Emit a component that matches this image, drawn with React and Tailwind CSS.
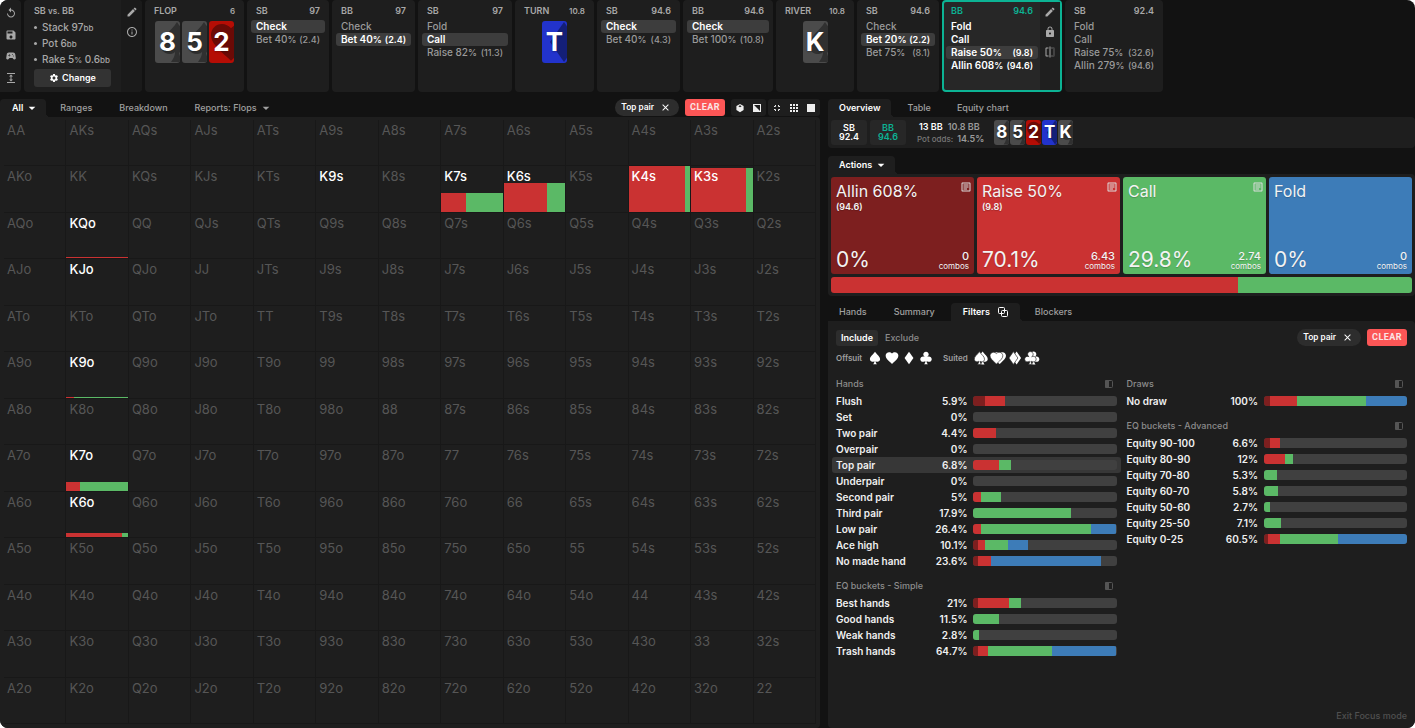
import React, { useState } from 'react'
import clsx from 'clsx'
import {
  MdReplay, MdSave, MdSportsEsports, MdExpand, MdEdit, MdInfoOutline, MdSettings,
  MdLock, MdFlip, MdClose, MdArrowDropDown, MdOutlineArticle
} from 'react-icons/md'

const RANKS = 'AKQJT98765432'.split('')

const SUIT_PATHS = {
  spade: 'M12,2C9,7 4,9 4,14C4,16 6,18 8,18C9,18 10,18 11,17C11,17 11.32,19 9,22H15C13,19 13,17 13,17C14,18 15,18 16,18C18,18 20,16 20,14C20,9 15,7 12,2Z',
  heart: 'M12,21.35L10.55,20.03C5.4,15.36 2,12.27 2,8.5C2,5.41 4.42,3 7.5,3C9.24,3 10.91,3.81 12,5.08C13.09,3.81 14.76,3 16.5,3C19.58,3 22,5.41 22,8.5C22,12.27 18.6,15.36 13.45,20.03L12,21.35Z',
  diamond: 'M19,12L12,22L5,12L12,2Z',
  club: 'M12,2C14.3,2 16.3,4 16.3,6.2C16.21,8.77 14.34,9.83 14.04,10C15.04,9.5 16.5,9.5 16.5,9.5C19,9.5 21,11.3 21,13.8C21,16.3 19,18 16.5,18C16.5,18 15,18 13,17C13,17 12.7,19 15,22H9C11.3,19 11,17 11,17C9,18 7.5,18 7.5,18C5,18 3,16.3 3,13.8C3,11.3 5,9.5 7.5,9.5C7.5,9.5 8.96,9.5 9.96,10C9.66,9.83 7.79,8.77 7.7,6.2C7.7,4 9.7,2 12,2Z'
}
const SUITS = Object.keys(SUIT_PATHS)

const CARD_COLORS = {
  spade: { bg: 'bg-[#4b4b4b]', shade: '#303030' },
  heart: { bg: 'bg-[#b50d05]', shade: '#6b0a06' },
  diamond: { bg: 'bg-[#2233cc]', shade: '#141f78' }
}

const BOARD = [
  { rank: '8', suit: 'spade' },
  { rank: '5', suit: 'spade' },
  { rank: '2', suit: 'heart' },
  { rank: 'T', suit: 'diamond' },
  { rank: 'K', suit: 'spade' }
]

const SEGMENT_COLORS = {
  allin: 'bg-[#7d1f1f]',
  raise: 'bg-[#ca3232]',
  call: 'bg-[#5bb966]',
  fold: 'bg-[#3d7cb8]'
}

// fill = height of the coloured part in the cell, raise = share of it that raises
const ACTIVE_HANDS = {
  K9s: { fill: 0 },
  K7s: { fill: 41, raise: 40 },
  K6s: { fill: 64, raise: 71 },
  K4s: { fill: 100, raise: 91 },
  K3s: { fill: 97, raise: 89 },
  KQo: { fill: 3, raise: 100 },
  KJo: { fill: 0 },
  K9o: { fill: 2, raise: 12 },
  K7o: { fill: 19, raise: 22 },
  K6o: { fill: 9, raise: 90 }
}

const HISTORY = [
  { street: 'FLOP', pot: '6', cards: BOARD.slice(0, 3), width: 'w-[99px]' },
  { player: 'SB', stack: '97', width: 'w-[82px]', picked: 0, actions: [['Check'], ['Bet 40', '2.4']] },
  { player: 'BB', stack: '97', width: 'w-[83px]', picked: 1, actions: [['Check'], ['Bet 40', '2.4']] },
  { player: 'SB', stack: '97', width: 'w-[94px]', picked: 1, actions: [['Fold'], ['Call'], ['Raise 82', '11.3']] },
  { street: 'TURN', pot: '10.8', cards: BOARD.slice(3, 4), width: 'w-[79px]' },
  { player: 'SB', stack: '94.6', width: 'w-[83px]', picked: 0, actions: [['Check'], ['Bet 40', '4.3']] },
  { player: 'BB', stack: '94.6', width: 'w-[90px]', picked: 0, actions: [['Check'], ['Bet 100', '10.8']] },
  { street: 'RIVER', pot: '10.8', cards: BOARD.slice(4), width: 'w-[78px]' },
  { player: 'SB', stack: '94.6', width: 'w-[82px]', picked: 1, actions: [['Check'], ['Bet 20', '2.2'], ['Bet 75', '8.1']] },
  { player: 'BB', stack: '94.6', width: 'w-[120px]', picked: 2, current: true, actions: [['Fold'], ['Call'], ['Raise 50', '9.8'], ['Allin 608', '94.6']] },
  { player: 'SB', stack: '92.4', width: 'w-[98px]', picked: -1, actions: [['Fold'], ['Call'], ['Raise 75', '32.6'], ['Allin 279', '94.6']] }
]

const ACTION_CARDS = [
  { type: 'allin', name: 'Allin 608%', size: '(94.6)', pct: '0%', combos: '0', note: true },
  { type: 'raise', name: 'Raise 50%', size: '(9.8)', pct: '70.1%', combos: '6.43', note: true },
  { type: 'call', name: 'Call', pct: '29.8%', combos: '2.74', note: true },
  { type: 'fold', name: 'Fold', pct: '0%', combos: '0' }
]

const HANDS = [
  { name: 'Flush', pct: '5.9%', allin: 8, raise: 14 },
  { name: 'Set', pct: '0%' },
  { name: 'Two pair', pct: '4.4%', raise: 16 },
  { name: 'Overpair', pct: '0%' },
  { name: 'Top pair', pct: '6.8%', raise: 18, call: 8 },
  { name: 'Underpair', pct: '0%' },
  { name: 'Second pair', pct: '5%', raise: 5, call: 14 },
  { name: 'Third pair', pct: '17.9%', call: 68 },
  { name: 'Low pair', pct: '26.4%', raise: 5, call: 77, fold: 18 },
  { name: 'Ace high', pct: '10.1%', allin: 3, raise: 5, call: 16, fold: 14 },
  { name: 'No made hand', pct: '23.6%', allin: 3, raise: 9, fold: 77 }
]

const SIMPLE_BUCKETS = [
  { name: 'Best hands', pct: '21%', allin: 3, raise: 22, call: 8 },
  { name: 'Good hands', pct: '11.5%', call: 18 },
  { name: 'Weak hands', pct: '2.8%', call: 4 },
  { name: 'Trash hands', pct: '64.7%', allin: 3, raise: 7, call: 45, fold: 45 }
]

const DRAWS = [{ name: 'No draw', pct: '100%', allin: 4, raise: 19, call: 48, fold: 29 }]

const ADVANCED_BUCKETS = [
  { name: 'Equity 90-100', pct: '6.6%', allin: 4, raise: 7 },
  { name: 'Equity 80-90', pct: '12%', raise: 15, call: 5 },
  { name: 'Equity 70-80', pct: '5.3%', call: 9 },
  { name: 'Equity 60-70', pct: '5.8%', call: 10 },
  { name: 'Equity 50-60', pct: '2.7%', call: 4 },
  { name: 'Equity 25-50', pct: '7.1%', call: 12 },
  { name: 'Equity 0-25', pct: '60.5%', allin: 3, raise: 8, call: 41, fold: 48 }
]

const PlayingCard = ({ rank, suit, small }) => (
  <span
    className={clsx(
      'relative flex items-center justify-center overflow-hidden font-bold text-white',
      small ? 'h-[25px] w-[15px] rounded-[3px] text-[17px]' : 'h-[42px] w-[25px] rounded-[3px] text-[26px]',
      CARD_COLORS[suit].bg
    )}
  >
    <svg viewBox="0 0 25 42" preserveAspectRatio="none" className="absolute inset-0 size-full">
      <path d={SUIT_PATHS[suit]} transform="translate(-2 -3) scale(2)" fill={CARD_COLORS[suit].shade} />
    </svg>
    <span className="relative leading-none text-shadow-sm">{rank}</span>
  </span>
)

const HistoryNode = ({ node }) => {
  const { player, stack, actions, picked, current, width } = node
  return (
    <section
      className={clsx(
        'flex shrink-0 rounded',
        width,
        current ? 'border-2 border-[#0cb394] bg-[#272727]' : 'bg-[#1e1e1e] pt-[2px]'
      )}
    >
      <div className={clsx('min-w-0 flex-1', current ? 'px-[2px]' : 'px-1')}>
        <header
          className={clsx(
            'flex h-[18px] items-center justify-between px-[5px] pb-px text-[9px] font-semibold',
            current ? 'text-[#0cb394]' : 'text-[#a8a8a8]'
          )}
        >
          <span>{player}</span>
          <span>{stack}</span>
        </header>
        {actions.map(([label, amount], i) => (
          <button
            key={label}
            type="button"
            className={clsx(
              'flex h-[13px] w-full items-center justify-between rounded-[3px] px-[5px] text-[10px] whitespace-nowrap',
              i === picked && 'bg-[#3d3d3d]',
              i === picked || current ? 'font-semibold text-white' : 'font-medium text-[#9a9a9a]'
            )}
          >
            <span>{label}{amount && <span className="text-[9px]">%</span>}</span>
            {amount && <span className="text-[9px]">({amount})</span>}
          </button>
        ))}
      </div>
      {current && (
        <div className="flex w-5 flex-col items-center gap-2 bg-[#1f1f1f] pt-1 text-[#a8a8a8]">
          <button type="button" aria-label="Edit node"><MdEdit size={12} /></button>
          <button type="button" aria-label="Lock node"><MdLock size={12} /></button>
          <button type="button" aria-label="Compare"><MdFlip size={12} /></button>
        </div>
      )}
    </section>
  )
}

const StreetNode = ({ node }) => (
  <section className={clsx('shrink-0 rounded bg-[#1e1e1e] pt-[2px]', node.width)}>
    <header className="mb-px flex h-[18px] items-center justify-between px-[9px] pb-px text-[9px] font-semibold text-[#a8a8a8]">
      <span>{node.street}</span>
      <span className="text-[8px]">{node.pot}</span>
    </header>
    <div className="flex justify-center gap-[2px]">
      {node.cards.map(card => <PlayingCard key={card.rank} {...card} />)}
    </div>
  </section>
)

const SetupItem = ({ children }) => (
  <li className="flex h-4 items-center gap-[5px]">
    <i className="size-[3px] rounded-full bg-current" />
    <span>{children}</span>
  </li>
)

const SetupPanel = () => (
  <section className="flex w-[118px] shrink-0 overflow-hidden rounded bg-[#1e1e1e] text-[#a8a8a8]">
    <div className="flex-1 pt-[3px] pl-[10px]">
      <h2 className="h-4 text-[9px] leading-4 font-semibold">SB <span className="text-[8px]">vs.</span> BB</h2>
      <ul className="text-[10px] font-medium whitespace-nowrap">
        <SetupItem>Stack 97<small className="text-[8px]">bb</small></SetupItem>
        <SetupItem>Pot 6<small className="text-[8px]">bb</small></SetupItem>
        <SetupItem>Rake 5<small className="text-[8px]">%</small> 0.6<small className="text-[8px]">bb</small></SetupItem>
      </ul>
      <button type="button" className="mt-[2px] flex h-[18px] w-[77px] items-center justify-center gap-[3px] rounded-[3px] bg-[#333] text-[9px] font-semibold text-white">
        <MdSettings size={10} />Change
      </button>
    </div>
    <div className="flex w-[21px] flex-col items-center gap-2 bg-[#1a1a1a] pt-[6px]">
      <button type="button" aria-label="Edit setup"><MdEdit size={12} /></button>
      <button type="button" aria-label="Info"><MdInfoOutline size={12} /></button>
    </div>
  </section>
)

const Tab = ({ active, className, children }) => (
  <button
    type="button"
    className={clsx(
      'relative flex h-[18px] items-center rounded-t text-[9px] whitespace-nowrap',
      active
        ? 'bg-[#1e1e1e] font-semibold text-white after:absolute after:bottom-0 after:left-full after:size-1 after:bg-[radial-gradient(circle_at_100%_0,transparent_4px,#1e1e1e_4px)]'
        : 'font-medium text-[#a0a0a0]',
      className
    )}
  >
    {children}
  </button>
)

const FilterChip = () => (
  <span className="flex h-[17px] items-center gap-[6px] rounded-full bg-[#2d2d2d] pr-2 pl-[6px] font-[Roboto,sans-serif] text-[9px] font-medium text-white">
    Top pair
    <button type="button" aria-label="Remove filter"><MdClose size={11} /></button>
  </span>
)

const ClearButton = () => (
  <button type="button" className="h-[17px] w-10 rounded-[3px] bg-[#fc5656] text-center font-[Roboto,sans-serif] text-[9px] font-bold tracking-wider text-[#fbe5e5]">
    CLEAR
  </button>
)

const HandCell = ({ hand }) => {
  const active = ACTIVE_HANDS[hand]
  return (
    <button type="button" className="relative flex border-r border-b border-[#181818]">
      {active?.fill > 0 && (
        <span className="absolute inset-x-0 bottom-0 flex" style={{ height: `${active.fill}%` }}>
          <span className={SEGMENT_COLORS.raise} style={{ width: `${active.raise}%` }} />
          <span className={clsx('flex-1', SEGMENT_COLORS.call)} />
        </span>
      )}
      <span className={clsx('relative pt-px pl-[3px] text-[13px] leading-[18px]', active ? 'font-medium text-white' : 'text-[#565656]')}>
        {hand}
      </span>
    </button>
  )
}

const HandMatrix = () => (
  <div className="grid flex-1 auto-rows-fr grid-cols-13">
    {RANKS.map((row, r) => RANKS.map((col, c) => {
      const hand = r === c ? row + col : r < c ? `${row}${col}s` : `${col}${row}o`
      return <HandCell key={hand} hand={hand} />
    }))}
  </div>
)

const ViewToggles = () => (
  <div className="flex gap-[2px] text-[#eee]">
    <div className="flex h-[17px] items-center gap-[7px] rounded-[3px] bg-[#1e1e1e] px-1">
      <button type="button" aria-label="Blocks">
        <svg width="10" height="10" viewBox="0 0 10 10"><path d="M5 1l3.6 2v4L5 9.200 1.400 7V3z" fill="currentColor" /><path d="M3.400 3.300L5 2.300l1.600 1L5 4.300z" fill="#1e1e1e" /></svg>
      </button>
      <button type="button" aria-label="Contrast">
        <svg width="10" height="10" viewBox="0 0 10 10"><rect x="1.500" y="1.500" width="7" height="7" fill="none" stroke="currentColor" /><path d="M1.500 1.500v7h7z" fill="currentColor" /></svg>
      </button>
    </div>
    <div className="flex h-[17px] items-center gap-[7px] rounded-[3px] bg-[#1e1e1e] px-1">
      <button type="button" aria-label="Small grid">
        <svg width="10" height="10" viewBox="0 0 10 10"><path d="M2 3.500h1.500V2M6.500 2v1.500H8M8 6.500H6.500V8M3.500 8V6.500H2" fill="none" stroke="currentColor" /></svg>
      </button>
      <button type="button" aria-label="Medium grid">
        <svg width="10" height="10" viewBox="0 0 10 10">
          {[2, 5, 8].map(y => [2, 5, 8].map(x => <rect key={`${x}${y}`} x={x - 1} y={y - 1} width="2" height="2" fill="currentColor" />))}
        </svg>
      </button>
      <button type="button" aria-label="Full grid">
        <svg width="10" height="10" viewBox="0 0 10 10"><rect x="1" y="1" width="8" height="8" fill="currentColor" /></svg>
      </button>
    </div>
  </div>
)

const OverviewPanel = () => (
  <section>
    <nav className="flex">
      <Tab active className="px-[11px]">Overview</Tab>
      <Tab className="pr-[13px] pl-4">Table</Tab>
      <Tab className="px-[13px]">Equity chart</Tab>
    </nav>
    <div className="flex h-[31px] items-center rounded-r rounded-bl bg-[#1e1e1e] pl-[3px] text-[9px] font-semibold">
      <div className="flex gap-[3px] text-center leading-[9px]">
        <div className="h-[25px] w-9 rounded-[3px] bg-[#272727] pt-[3px] text-white">SB<br />92.4</div>
        <div className="h-[25px] w-9 rounded-[3px] bg-[#272727] pt-[3px] text-[#0cb394]">BB<br />94.6</div>
      </div>
      <div className="ml-[11px] leading-3 text-[#9a9a9a]">
        <div className="flex gap-[5px] pl-[2px]"><span className="text-white">13 BB</span><span>10.8 BB</span></div>
        <div className="flex gap-1"><span className="text-[8px] font-medium text-[#777]">Pot odds:</span><span>14.5%</span></div>
      </div>
      <div className="ml-[10px] flex gap-px">
        {BOARD.map(card => <PlayingCard key={card.rank} small {...card} />)}
      </div>
    </div>
  </section>
)

const ActionsPanel = () => (
  <section className="mt-2">
    <nav className="flex">
      <Tab active className="pr-[6px] pl-[11px]">Actions <MdArrowDropDown size={16} className="ml-px" /></Tab>
    </nav>
    <div className="rounded-r rounded-bl bg-[#1e1e1e] p-[3px]">
      <div className="grid grid-cols-4 gap-[3px]">
        {ACTION_CARDS.map(card => (
          <button
            key={card.name}
            type="button"
            className={clsx(
              'flex h-[97px] flex-col justify-between rounded-[3px] px-[5px] pt-1 pb-[3px] text-left text-[#f3f3f3] text-shadow-xs',
              SEGMENT_COLORS[card.type]
            )}
          >
            <span className="flex w-full items-start justify-between">
              <span>
                <span className="block text-[16px] leading-5">{card.name}</span>
                {card.size && <span className="block text-[9px] leading-3 font-semibold">{card.size}</span>}
              </span>
              {card.note && <MdOutlineArticle size={12} className="-mr-[3px] text-[#ddd]" />}
            </span>
            <span className="flex w-full items-end justify-between">
              <span className="text-[21px] leading-[22px]">{card.pct}</span>
              <span className="text-right leading-[9px]">
                <span className="block text-[11px] leading-[11px] font-medium">{card.combos}</span>
                <span className="block text-[8px]">combos</span>
              </span>
            </span>
          </button>
        ))}
      </div>
      <div className="mt-[3px] flex h-4 overflow-hidden rounded-[3px]">
        <span className={SEGMENT_COLORS.raise} style={{ width: '70.1%' }} />
        <span className={clsx('flex-1', SEGMENT_COLORS.call)} />
      </div>
    </div>
  </section>
)

const FilterGroup = ({ title, rows, selected }) => (
  <section className="mb-2">
    <header className="flex h-[18px] items-center justify-between pr-1 text-[9px] font-medium text-[#8c8c8c]">
      <h3>{title}</h3>
      <button type="button" aria-label={`Split ${title}`}>
        <svg width="8" height="8" viewBox="0 0 8 8"><rect x="0.500" y="0.500" width="7" height="7" rx="1" fill="none" stroke="#555" /><rect width="4" height="8" rx="1" fill="#555" /></svg>
      </button>
    </header>
    {rows.map(row => (
      <button
        key={row.name}
        type="button"
        className={clsx('-mx-1 flex h-4 w-[calc(100%+8px)] items-center rounded-[3px] px-1 text-[10px] font-semibold text-[#f0f0f0]', row.name === selected && 'bg-[#373737]')}
      >
        <span>{row.name}</span>
        <span className="ml-auto">{row.pct}</span>
        <span className="ml-[6px] flex h-[10px] w-[51%] overflow-hidden rounded-[3px] bg-[#404040]">
          {Object.keys(SEGMENT_COLORS).map(type => row[type] && (
            <span key={type} className={SEGMENT_COLORS[type]} style={{ width: `${row[type]}%` }} />
          ))}
        </span>
      </button>
    ))}
  </section>
)

const FiltersPanel = () => {
  const [mode, setMode] = useState('Include')
  return (
    <section className="mt-[7px] flex flex-1 flex-col">
      <nav className="flex">
        <Tab className="px-[11px]">Hands</Tab>
        <Tab className="px-4">Summary</Tab>
        <Tab active className="gap-2 px-3">
          Filters
          <svg width="10" height="10" viewBox="0 0 10 10" fill="none" stroke="currentColor"><rect x="0.500" y="0.500" width="6" height="6" rx="1" /><rect x="3.500" y="3.500" width="6" height="6" rx="1" /></svg>
        </Tab>
        <Tab className="px-[15px]">Blockers</Tab>
      </nav>
      <div className="flex flex-1 flex-col rounded-tr rounded-bl bg-[#1e1e1e] px-2 pt-2">
        <div className="flex items-center">
          {['Include', 'Exclude'].map(m => (
            <button
              key={m}
              type="button"
              onClick={() => setMode(m)}
              className={clsx('h-4 rounded-[3px] px-[5px] text-[9px]', m === mode ? 'bg-[#2d2d2d] font-semibold text-white' : 'ml-[2px] font-medium text-[#8c8c8c]')}
            >
              {m}
            </button>
          ))}
          <div className="ml-auto flex gap-[6px]"><FilterChip /><ClearButton /></div>
        </div>
        <div className="mt-[5px] flex h-[14px] items-center text-[8px] font-semibold text-[#a0a0a0]">
          <span>Offsuit</span>
          <span className="ml-[6px] flex gap-[3px]">
            {SUITS.map(suit => (
              <button key={suit} type="button" aria-label={`Offsuit ${suit}`}>
                <svg width="14" height="16" viewBox="1 0 22 24"><path d={SUIT_PATHS[suit]} fill="#fff" /></svg>
              </button>
            ))}
          </span>
          <span className="ml-[10px]">Suited</span>
          <span className="ml-[5px] flex gap-px">
            {SUITS.map(suit => (
              <button key={suit} type="button" aria-label={`Suited ${suit}`}>
                <svg width="16" height="16" viewBox="2 0 25 24" className="overflow-visible">
                  <path d={SUIT_PATHS[suit]} transform="translate(5 0)" fill="#fff" />
                  <path d={SUIT_PATHS[suit]} fill="#fff" stroke="#1e1e1e" strokeWidth="1" />
                </svg>
              </button>
            ))}
          </span>
        </div>
        <div className="mt-[10px] grid grid-cols-2 gap-x-[10px]">
          <div>
            <FilterGroup title="Hands" rows={HANDS} selected="Top pair" />
            <FilterGroup title="EQ buckets - Simple" rows={SIMPLE_BUCKETS} />
          </div>
          <div>
            <FilterGroup title="Draws" rows={DRAWS} />
            <FilterGroup title="EQ buckets - Advanced" rows={ADVANCED_BUCKETS} />
          </div>
        </div>
        <button type="button" className="mt-auto mb-[6px] self-end text-[9px] font-medium text-[#505050]">Exit Focus mode</button>
      </div>
    </section>
  )
}

const App = () => {
  return (
    <div className="flex min-h-screen flex-col overflow-hidden rounded-lg bg-[#121212] font-[Inter,sans-serif]">
      <div className="flex h-[92px] gap-[3px]">
        <div className="flex w-[21px] shrink-0 flex-col items-center justify-between rounded-r bg-[#1e1e1e] pt-[7px] pb-2 text-[#a8a8a8]">
          <button type="button" aria-label="Reset"><MdReplay size={12} /></button>
          <button type="button" aria-label="Save"><MdSave size={12} /></button>
          <button type="button" aria-label="Practice"><MdSportsEsports size={12} /></button>
          <button type="button" aria-label="Resize"><MdExpand size={12} /></button>
        </div>
        <SetupPanel />
        {HISTORY.map((node, i) => node.street
          ? <StreetNode key={i} node={node} />
          : <HistoryNode key={i} node={node} />)}
      </div>

      <main className="mt-[7px] grid flex-1 grid-cols-[820fr_587fr] gap-2">
        <div className="flex flex-col">
          <div className="flex">
            <nav className="flex">
              <Tab active className="gap-px pr-[6px] pl-3">All <MdArrowDropDown size={16} /></Tab>
              <Tab className="px-[14px]">Ranges</Tab>
              <Tab className="px-[13px]">Breakdown</Tab>
              <Tab className="gap-px pr-[5px] pl-[14px]">Reports: Flops <MdArrowDropDown size={16} /></Tab>
            </nav>
            <div className="ml-auto flex gap-[6px]"><FilterChip /><ClearButton /><ViewToggles /></div>
          </div>
          <div className="flex flex-1 flex-col rounded-r bg-[#1e1e1e] px-1 pt-[3px] pb-1">
            <HandMatrix />
          </div>
        </div>
        <div className="flex flex-col">
          <OverviewPanel />
          <ActionsPanel />
          <FiltersPanel />
        </div>
      </main>
    </div>
  )
}

export default App
